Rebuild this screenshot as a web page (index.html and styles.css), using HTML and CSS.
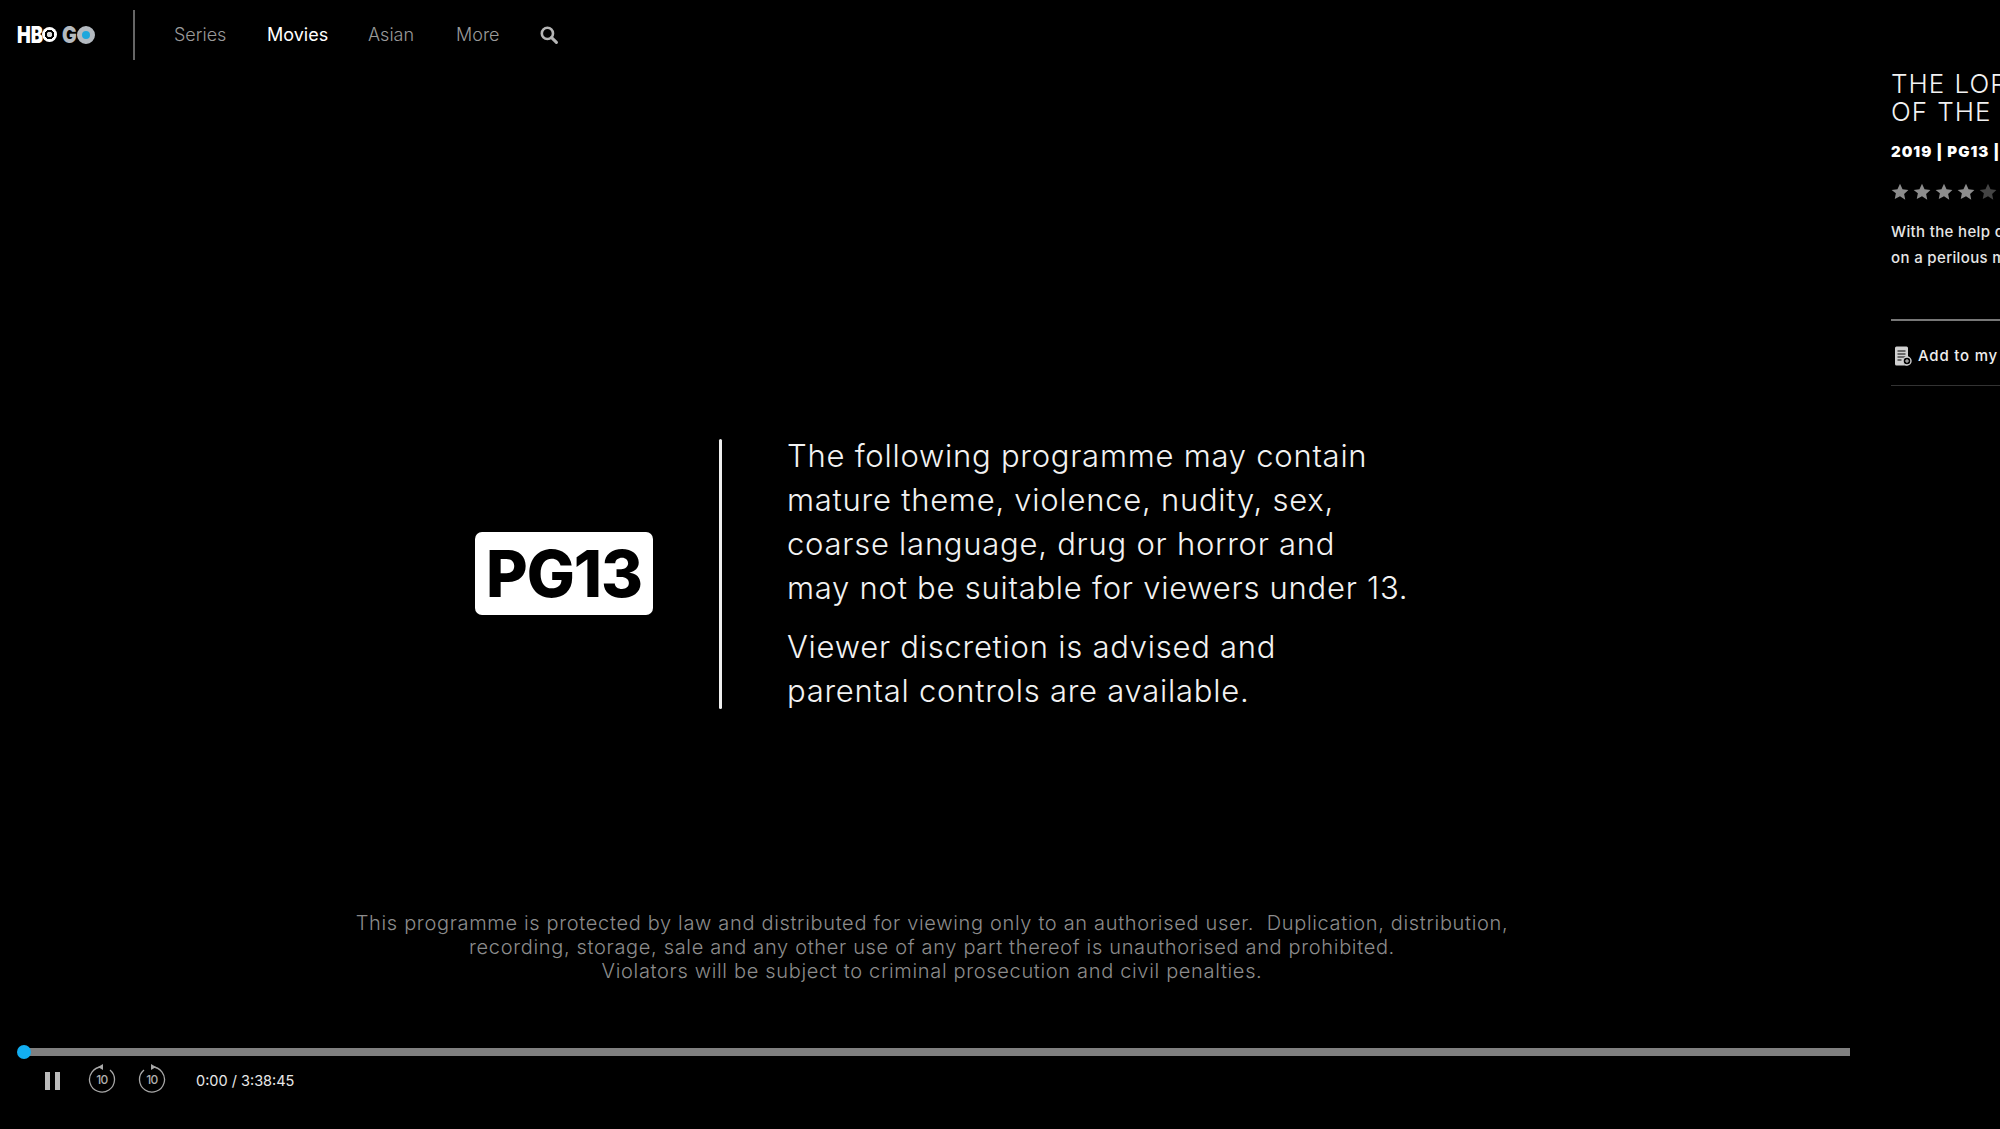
FILE: index.html
```html
<!DOCTYPE html>
<html lang="en">
<head>
  <meta charset="UTF-8">
  <title>HBO GO</title>
  <link rel="stylesheet" href="styles.css">
</head>
<body>
<div class="page">
  <div class="player">
    <header class="topbar">
      <div class="logo">
        <span class="logo-hb">HB</span><span class="ring ring-white"></span>
        <span class="logo-g">G</span><span class="ring ring-blue"></span>
      </div>
      <div class="topbar-line"></div>
      <nav class="nav">
        <a class="nav-series">Series</a>
        <a class="nav-movies active">Movies</a>
        <a class="nav-asian">Asian</a>
        <a class="nav-more">More</a>
        <svg class="search" viewBox="0 0 18 18" width="18" height="18">
          <circle cx="7.4" cy="7.4" r="5.6" fill="none" stroke="#b5b5b5" stroke-width="2.6"/>
          <path d="M11.6 11.6 L16.4 16.4" stroke="#b5b5b5" stroke-width="3" stroke-linecap="round"/>
        </svg>
      </nav>
    </header>

    <section class="notice">
      <div class="badge">PG13</div>
      <div class="notice-line"></div>
      <div class="notice-text">
        <p>The following programme may contain<br>mature theme, violence, nudity, sex,<br>coarse language, drug or horror and<br>may not be suitable for viewers under 13.</p>
        <p>Viewer discretion is advised and<br>parental controls are available.</p>
      </div>
    </section>

    <p class="legal">This programme is protected by law and distributed for viewing only to an authorised user.&nbsp; Duplication, distribution,<br>recording, storage, sale and any other use of any part thereof is unauthorised and prohibited.<br>Violators will be subject to criminal prosecution and civil penalties.</p>

    <div class="progress"><div class="knob"></div></div>

    <div class="controls">
      <div class="pause"><i></i><i></i></div>
      <svg class="skip skip-back" viewBox="0 0 28 30" width="28" height="30">
        <path d="M14 4 A12.5 12.5 0 1 0 22 6.9" fill="none" stroke="#a8a8a8" stroke-width="1.3"/>
        <path d="M10 4 L15 1 V7 Z" fill="#a8a8a8"/>
        <text x="14" y="20.5" text-anchor="middle" class="skip-num">10</text>
      </svg>
      <svg class="skip skip-fwd" viewBox="0 0 28 30" width="28" height="30">
        <path d="M14 4 A12.5 12.5 0 1 1 6 6.9" fill="none" stroke="#a8a8a8" stroke-width="1.3"/>
        <path d="M18 4 L13 1 V7 Z" fill="#a8a8a8"/>
        <text x="14" y="20.5" text-anchor="middle" class="skip-num">10</text>
      </svg>
      <span class="time">0:00 / 3:38:45</span>
    </div>
  </div>

  <aside class="side">
    <h1 class="title">THE LORD OF THE RINGS: THE RETURN<br>OF THE <span class="title-end">KING</span></h1>
    <div class="meta">2019 | PG13 | 3h 21m</div>
    <div class="stars">
      <svg viewBox="0 0 24 24" width="18" height="18"><path d="M12 1l3.4 7.2 7.8 1-5.7 5.4 1.5 7.8L12 17.6 5 21.4l1.5-7.8L.8 9.2l7.8-1z" fill="#8c8c8c"/></svg>
      <svg viewBox="0 0 24 24" width="18" height="18"><path d="M12 1l3.4 7.2 7.8 1-5.7 5.4 1.5 7.8L12 17.6 5 21.4l1.5-7.8L.8 9.2l7.8-1z" fill="#8c8c8c"/></svg>
      <svg viewBox="0 0 24 24" width="18" height="18"><path d="M12 1l3.4 7.2 7.8 1-5.7 5.4 1.5 7.8L12 17.6 5 21.4l1.5-7.8L.8 9.2l7.8-1z" fill="#8c8c8c"/></svg>
      <svg viewBox="0 0 24 24" width="18" height="18"><path d="M12 1l3.4 7.2 7.8 1-5.7 5.4 1.5 7.8L12 17.6 5 21.4l1.5-7.8L.8 9.2l7.8-1z" fill="#8c8c8c"/></svg>
      <svg viewBox="0 0 24 24" width="18" height="18"><path d="M12 1l3.4 7.2 7.8 1-5.7 5.4 1.5 7.8L12 17.6 5 21.4l1.5-7.8L.8 9.2l7.8-1z" fill="#444"/></svg>
    </div>
    <p class="desc">With the help of his friends, Frodo sets out<br>on a perilous mission to destroy the ring.</p>
    <div class="mylist">
      <svg viewBox="0 0 18 20" width="18" height="20">
        <path d="M1 2 a1.5 1.5 0 0 1 1.5-1.5 h10 a1.5 1.5 0 0 1 1.5 1.5 v16 a1.5 1.5 0 0 1-1.5 1.5 h-10 a1.5 1.5 0 0 1-1.5-1.5z" fill="#d0d0d0"/>
        <path d="M3.5 5h8M3.5 8h8M3.5 11h8M3.5 14h4" stroke="#000" stroke-width="1.2"/>
        <circle cx="13" cy="15" r="4" fill="#000" stroke="#d0d0d0" stroke-width="1.4"/>
        <path d="M11 15h4M13 13v4" stroke="#d0d0d0" stroke-width="1"/>
      </svg>
      <span>Add to my list</span>
    </div>
  </aside>
</div>
</body>
</html>
```

FILE: styles.css
```css
* { box-sizing: border-box; }
html, body { margin: 0; height: 100%; background: #000; overflow: hidden; }
body { font-family: Inter, "Open Sans", sans-serif; color: #fff; }
p { margin: 0; }

.page { display: flex; width: 2000px; height: 1129px; overflow: hidden; }
.player { width: 1850px; flex: none; }

/* top bar */
.topbar { display: flex; align-items: center; height: 69px; padding: 0 0 0 17px; }
.logo { display: flex; align-items: center; width: 116px; height: 18px; font-weight: 900; font-size: 23px; line-height: 18px; }
.logo-hb { color: #fff; width: 25px; transform: scaleX(.8); transform-origin: left; white-space: nowrap; }
.logo-g { color: #b4bac0; width: 15px; margin-left: 5px; transform: scaleX(.85); transform-origin: left; }
.ring { width: 18px; height: 18px; border-radius: 50%; flex: none; }
.ring-white { width: 15px; height: 15px; background: radial-gradient(circle, #ddd 0 2.5px, #000 3px 4.5px, #fff 5px); }
.ring-blue { background: #1fa7dc; border: 5px solid #b4bac0; }
.topbar-line { width: 2px; height: 50px; background: #666; }
.nav { display: flex; align-items: center; margin-left: 39px; font-size: 18px; font-weight: 300; color: #9a9a9a; }
.nav a { display: block; }
.nav-series { width: 93px; }
.nav-movies { width: 101px; }
.nav-asian { width: 88px; }
.nav-more { width: 84px; }
.nav .active { color: #fff; font-weight: 400; }
.search { display: block; }

/* rating notice */
.notice { display: flex; align-items: center; margin-top: 365px; padding-left: 475px; }
.badge { width: 178px; height: 83px; background: #fff; color: #000; border-radius: 7px; font-size: 64px; font-weight: 800; line-height: 83px; text-align: center; letter-spacing: -1px; }
.notice-line { width: 3px; height: 270px; margin: 0 65px 0 66px; background: #eee; border-radius: 2px; }
.notice-text { font-size: 31px; line-height: 44px; font-weight: 300; color: #f2f2f2; letter-spacing: .75px; }
.notice-text p + p { margin-top: 15px; }

.legal { margin-top: 198px; margin-left: 14px; text-align: center; font-size: 20px; line-height: 24px; font-weight: 300; color: #8c8c8c; letter-spacing: .67px; }

/* player controls */
.progress { position: relative; height: 8px; margin: 65px 0 0 24px; background: #808080; }
.knob { position: absolute; left: -7px; top: -3px; width: 14px; height: 14px; border-radius: 50%; background: #12aef2; }
.controls { display: flex; align-items: center; height: 32px; margin-top: 8px; padding-left: 45px; }
.pause { display: flex; gap: 5px; width: 43px; margin-top: 2px; }
.pause i { display: block; width: 5px; height: 18px; background: #bbb; }
.skip { display: block; margin-right: 22px; margin-top: -4px; }
.skip-num { font-size: 12px; font-weight: 500; fill: #b0b0b0; font-family: Inter, sans-serif; letter-spacing: -.5px; }
.time { margin-left: 8px; font-size: 14.5px; color: #e8e8e8; }

/* details panel cut off at the right edge */
.side { flex: none; width: 600px; padding: 70px 0 0 41px; white-space: nowrap; }
.title { margin: 0; font-size: 26px; line-height: 28px; font-weight: 300; color: #f2f2f2; letter-spacing: 1px; word-spacing: 1px; }
.title-end { margin-left: 8px; }
.meta { margin-top: 16px; font-size: 15px; line-height: 20px; font-weight: 900; letter-spacing: 1px; }
.stars { display: flex; gap: 4px; margin-top: 21px; height: 20px; }
.desc { margin-top: 16px; font-size: 15px; line-height: 26px; font-weight: 500; color: #e6e6e6; letter-spacing: .35px; }
.mylist { display: flex; align-items: center; gap: 6px; height: 67px; margin-top: 48px; padding: 5px 0 0 3px; border-top: 2px solid #777; border-bottom: 1px solid #333; font-size: 15px; font-weight: 500; letter-spacing: .8px; color: #eee; }
```
